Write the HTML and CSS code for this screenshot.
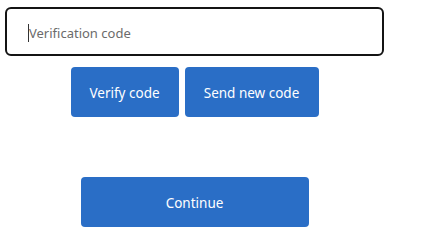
FILE: index.html
```html
<!DOCTYPE html>
<html>
<head>
<meta charset="utf-8">
<link rel="stylesheet" href="styles.css">
</head>
<body>
<div class="page">
  <div class="field">
    <span class="caret"></span><span class="placeholder">Verification code</span>
  </div>
  <div class="actions">
    <button class="btn btn-verify">Verify code</button>
    <button class="btn btn-send">Send new code</button>
  </div>
  <div class="continue-row">
    <button class="btn btn-continue">Continue</button>
  </div>
</div>
</body>
</html>
```
FILE: styles.css
```css
html, body {
  margin: 0;
  padding: 0;
  background: #ffffff;
}
.page {
  width: 379px;
  padding: 7px 5px;
  font-family: "Noto Sans", "Open Sans", sans-serif;
}
.field {
  box-sizing: border-box;
  height: 49px;
  border: 2px solid #141414;
  border-radius: 6px;
  display: flex;
  align-items: center;
  padding-left: 21px;
  padding-top: 2px;
}
.caret {
  width: 1px;
  height: 18px;
  background: #333;
}
.placeholder {
  color: #6b6b6b;
  font-size: 13px;
  white-space: nowrap;
}
.actions {
  margin-top: 11px;
  display: flex;
  justify-content: center;
  gap: 6px;
}
.btn {
  box-sizing: border-box;
  height: 50px;
  border: none;
  border-radius: 4px;
  background: #2a6ec6;
  color: #ffffff;
  font-family: "Noto Sans", "Open Sans", sans-serif;
  font-size: 13.5px;
  padding: 1px 0 0;
  white-space: nowrap;
  cursor: pointer;
}
.btn-verify { width: 108px; }
.btn-send { width: 134px; }
.continue-row {
  margin-top: 60px;
  display: flex;
  justify-content: center;
}
.btn-continue {
  width: 228px;
}
```
